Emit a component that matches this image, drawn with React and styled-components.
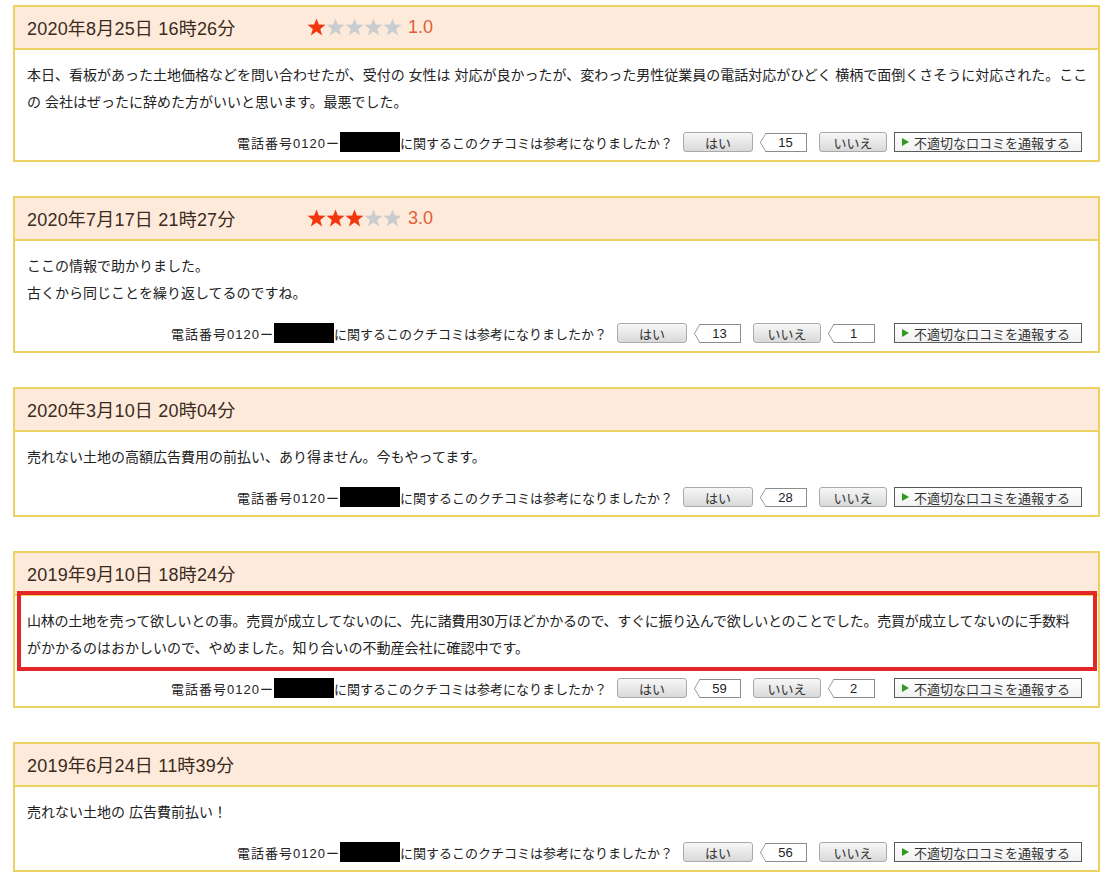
import React from 'react';
import styled, { createGlobalStyle } from 'styled-components';

const GlobalStyle = createGlobalStyle`
  body {
    margin: 0;
    background: #fff;
    font-family: "Liberation Sans", "Noto Sans CJK JP", sans-serif;
    color: #222;
  }
`;

const Page = styled.div`
  padding: 5px 15px 0 13px;
`;

const Card = styled.section`
  border: 2px solid #edd262;
  margin-bottom: 34px;
  background: #fff;
`;

const Header = styled.header`
  display: flex;
  align-items: center;
  height: 40px;
  padding: 0 0 1px 12px;
  background: #fdeada;
  border-bottom: 2px solid #edd262;
`;

const DateText = styled.div`
  width: 280px;
  font-size: 18px;
  letter-spacing: 0.2px;
  color: #3b2a1f;
`;

const Stars = styled.div`
  display: flex;
  align-items: center;
`;

const RatingValue = styled.span`
  margin-left: 6px;
  font-size: 18px;
  color: #e25c36;
`;

const Body = styled.div`
  position: relative;
  padding: 12px 12px 0;
  font-size: 14px;
  line-height: 27px;
  color: #222;

  ${(p) =>
    p.$highlighted &&
    `
    &::after {
      content: "";
      position: absolute;
      top: -5px;
      left: 2px;
      right: 1px;
      bottom: -9px;
      border: 4px solid #e32626;
      pointer-events: none;
    }
  `}
`;

const Line = styled.div`
  white-space: nowrap;
  letter-spacing: ${(p) => p.$spacing || 0}px;
`;

const Footer = styled.div`
  display: flex;
  justify-content: flex-end;
  align-items: center;
  height: 22px;
  margin-top: 15px;
  padding: 0 16px 7px 0;
  font-size: 13px;
`;

const Question = styled.span`
  display: flex;
  align-items: center;
  margin-right: 10px;
  color: #222;
`;

const Prefix = styled.span`
  letter-spacing: 1px;
`;

const Redacted = styled.span`
  display: inline-block;
  width: 60px;
  height: 20px;
  background: #000;
`;

const VoteButton = styled.button`
  width: ${(p) => p.$width}px;
  height: 20px;
  padding: 0;
  border: 1px solid #a9a9a9;
  border-radius: 3px;
  background: linear-gradient(#f7f7f7, #d9d9d9);
  font-family: inherit;
  font-size: 13px;
  color: #333;
`;

const Count = styled.span`
  position: relative;
  box-sizing: border-box;
  width: 42px;
  height: 19px;
  margin: 0 12px 0 12px;
  border: 1px solid #8c8c8c;
  border-left: none;
  background: #fff;
  font-size: 13px;
  line-height: 17px;
  text-align: center;
  color: #222;

  &::before {
    content: "";
    position: absolute;
    top: 2px;
    left: -6px;
    width: 12px;
    height: 12px;
    background: #fff;
    border-left: 1px solid #8c8c8c;
    border-bottom: 1px solid #8c8c8c;
    transform: scaleX(0.6) rotate(45deg);
  }
`;

const ReportButton = styled.button`
  display: flex;
  align-items: center;
  gap: 5px;
  width: 188px;
  height: 20px;
  margin-left: 7px;
  padding: 0 0 0 7px;
  border: 1px solid #5a5a5a;
  background: linear-gradient(#ffffff, #f1f1f1);
  font-family: inherit;
  font-size: 13px;
  color: #333;
`;

const Arrow = styled.span`
  width: 0;
  height: 0;
  border-top: 4px solid transparent;
  border-bottom: 4px solid transparent;
  border-left: 7px solid #2f9a1f;
`;

const Star = ({ filled }) => (
  <svg width="19" height="18" viewBox="0 0 24 23">
    <polygon
      points="12,0.5 15,8.3 23.5,8.6 16.8,13.9 19.2,22.3 12,17.4 4.8,22.3 7.2,13.9 0.5,8.6 9,8.3"
      fill={filled ? '#f2370f' : '#c9cdd0'}
    />
  </svg>
);

const reviews = [
  {
    date: '2020年8月25日 16時26分',
    rating: 1,
    lines: [
      { text: '本日、看板があった土地価格などを問い合わせたが、受付の 女性は 対応が良かったが、変わった男性従業員の電話対応がひどく 横柄で面倒くさそうに対応された。ここ' },
      { text: 'の 会社はぜったに辞めた方がいいと思います。最悪でした。' },
    ],
    yes: 15,
  },
  {
    date: '2020年7月17日 21時27分',
    rating: 3,
    lines: [{ text: 'ここの情報で助かりました。' }, { text: '古くから同じことを繰り返してるのですね。' }],
    yes: 13,
    no: 1,
  },
  {
    date: '2020年3月10日 20時04分',
    lines: [{ text: '売れない土地の高額広告費用の前払い、あり得ません。今もやってます。' }],
    yes: 28,
  },
  {
    date: '2019年9月10日 18時24分',
    lines: [
      {
        text: '山林の土地を売って欲しいとの事。売買が成立してないのに、先に諸費用30万ほどかかるので、すぐに振り込んで欲しいとのことでした。売買が成立してないのに手数料',
        spacing: -0.25,
      },
      { text: 'がかかるのはおかしいので、やめました。知り合いの不動産会社に確認中です。' },
    ],
    yes: 59,
    no: 2,
    highlighted: true,
  },
  {
    date: '2019年6月24日 11時39分',
    lines: [{ text: '売れない土地の 広告費前払い！' }],
    yes: 56,
  },
];

const Review = ({ review }) => (
  <Card>
    <Header>
      <DateText>{review.date}</DateText>
      {review.rating && (
        <>
          <Stars>
            {[1, 2, 3, 4, 5].map((n) => (
              <Star key={n} filled={n <= review.rating} />
            ))}
          </Stars>
          <RatingValue>{review.rating.toFixed(1)}</RatingValue>
        </>
      )}
    </Header>
    <Body $highlighted={review.highlighted}>
      {review.lines.map((line) => (
        <Line key={line.text} $spacing={line.spacing}>
          {line.text}
        </Line>
      ))}
    </Body>
    <Footer>
      <Question>
        <Prefix>電話番号0120ー</Prefix>
        <Redacted />
        に関するこのクチコミは参考になりましたか？
      </Question>
      <VoteButton $width={70}>はい</VoteButton>
      <Count>{review.yes}</Count>
      <VoteButton $width={68}>いいえ</VoteButton>
      {review.no && <Count>{review.no}</Count>}
      <ReportButton>
        <Arrow />
        不適切な口コミを通報する
      </ReportButton>
    </Footer>
  </Card>
);

const App = () => (
  <>
    <GlobalStyle />
    <Page>
      {reviews.map((review) => (
        <Review key={review.date} review={review} />
      ))}
    </Page>
  </>
);

export default App;
